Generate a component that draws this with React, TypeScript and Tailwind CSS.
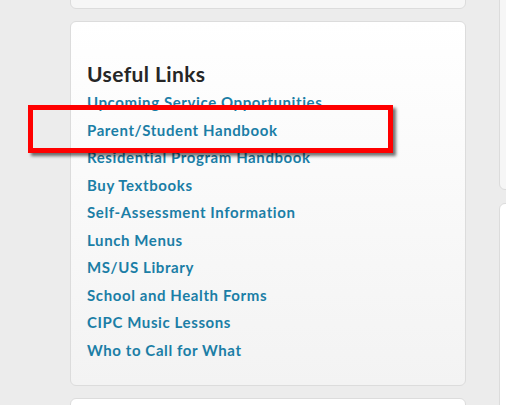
const links = [
  "Upcoming Service Opportunities",
  "Parent/Student Handbook",
  "Residential Program Handbook",
  "Buy Textbooks",
  "Self-Assessment Information",
  "Lunch Menus",
  "MS/US Library",
  "School and Health Forms",
  "CIPC Music Lessons",
  "Who to Call for What",
];

export default function App() {
  return (
    <div
      className="relative h-[405px] w-[506px] overflow-hidden bg-[#ececec]"
      style={{ fontFamily: "Lato, 'Open Sans', sans-serif" }}
    >
      <div className="flex gap-[33px] pl-[70px]">
        {/* Left column */}
        <div className="flex w-[396px] shrink-0 flex-col gap-3">
          <div className="-mt-[31px] h-[40px] rounded-md border border-[#dcdcdc] bg-[#f6f6f6]" />

          <div className="h-[365px] rounded-md border border-[#dcdcdc] bg-gradient-to-b from-white to-[#f3f3f3] pl-4 pt-[38px]">
            <h2 className="text-[21px] font-bold leading-[28px] tracking-[0.4px] text-[#262626]">Useful Links</h2>
            <ul className="mt-[1px]">
              {links.map((l) => (
                <li key={l} className="text-[15px] font-bold leading-[27.5px] tracking-[0.6px] text-[#1b7ea6]">
                  {l}
                </li>
              ))}
            </ul>
          </div>

          <div className="h-[40px] rounded-md border border-[#dcdcdc] bg-white" />
        </div>

        {/* Right column */}
        <div className="flex w-[60px] shrink-0 flex-col gap-[13px]">
          <div className="-mt-[20px] h-[210px] rounded-md border border-[#dcdcdc] bg-[#f6f6f6]" />
          <div className="h-[220px] rounded-md border border-[#dcdcdc] bg-white" />
        </div>
      </div>

      {/* Highlight box */}
      <div className="absolute left-[28px] top-[105px] h-[48px] w-[365px] border-[5px] border-[#ff0000] shadow-[3px_3px_3px_rgba(0,0,0,0.55)]" />
    </div>
  );
}
